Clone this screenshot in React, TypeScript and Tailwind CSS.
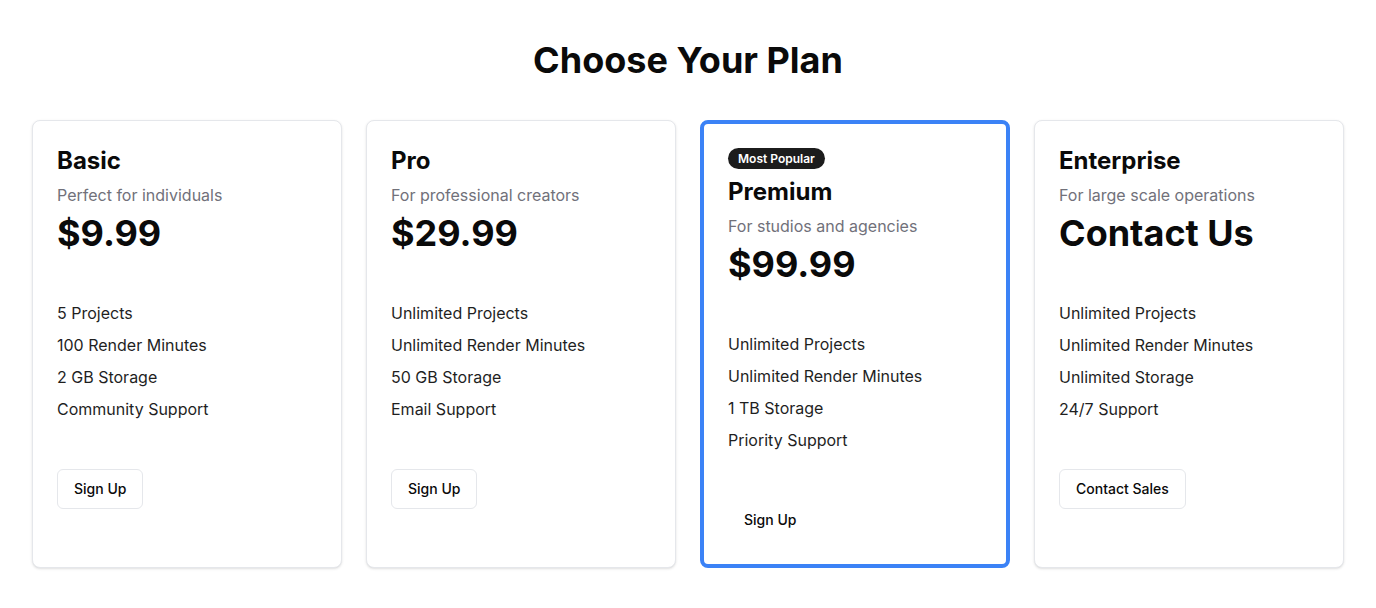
const plans = [
  {
    name: 'Basic',
    tagline: 'Perfect for individuals',
    price: '$9.99',
    features: ['5 Projects', '100 Render Minutes', '2 GB Storage', 'Community Support'],
    cta: 'Sign Up',
  },
  {
    name: 'Pro',
    tagline: 'For professional creators',
    price: '$29.99',
    features: ['Unlimited Projects', 'Unlimited Render Minutes', '50 GB Storage', 'Email Support'],
    cta: 'Sign Up',
  },
  {
    name: 'Premium',
    tagline: 'For studios and agencies',
    price: '$99.99',
    features: ['Unlimited Projects', 'Unlimited Render Minutes', '1 TB Storage', 'Priority Support'],
    cta: 'Sign Up',
    popular: true,
  },
  {
    name: 'Enterprise',
    tagline: 'For large scale operations',
    price: 'Contact Us',
    features: ['Unlimited Projects', 'Unlimited Render Minutes', 'Unlimited Storage', '24/7 Support'],
    cta: 'Contact Sales',
  },
];

export default function App() {
  return (
    <div
      className="min-h-screen bg-white px-8 pt-10 pb-10 text-[#0a0a0a]"
      style={{ fontFamily: 'Inter, "Noto Sans", sans-serif' }}
    >
      <h1 className="mb-10 text-center text-4xl font-bold">Choose Your Plan</h1>

      <div className="grid grid-cols-4 gap-6">
        {plans.map((plan) => (
          <div
            key={plan.name}
            className={
              plan.popular
                ? 'rounded-lg border-4 border-[#3b82f6] bg-white p-6'
                : 'rounded-lg border border-[#e5e7eb] bg-white p-6 shadow-sm'
            }
          >
            {plan.popular && (
              <div className="mb-[7px] flex">
                <span className="rounded-full bg-[#1c1c1c] px-2.5 py-0.5 text-xs leading-[17px] font-semibold text-white">
                  Most Popular
                </span>
              </div>
            )}
            <h3 className="text-2xl font-bold">{plan.name}</h3>
            <p className="mt-1.5 text-base text-[#71717a]">{plan.tagline}</p>
            <div className="mt-1.5 text-4xl font-bold">{plan.price}</div>

            <ul className="mt-12 flex flex-col gap-2 text-base text-[#1f1f1f]">
              {plan.features.map((f) => (
                <li key={f}>{f}</li>
              ))}
            </ul>

            <button
              className={
                plan.popular
                  ? 'mt-12 h-10 rounded-md px-4 text-sm font-medium text-[#0a0a0a]'
                  : 'mt-12 h-10 rounded-md border border-[#e5e7eb] bg-white px-4 text-sm font-medium text-[#0a0a0a]'
              }
            >
              {plan.cta}
            </button>
          </div>
        ))}
      </div>
    </div>
  );
}
